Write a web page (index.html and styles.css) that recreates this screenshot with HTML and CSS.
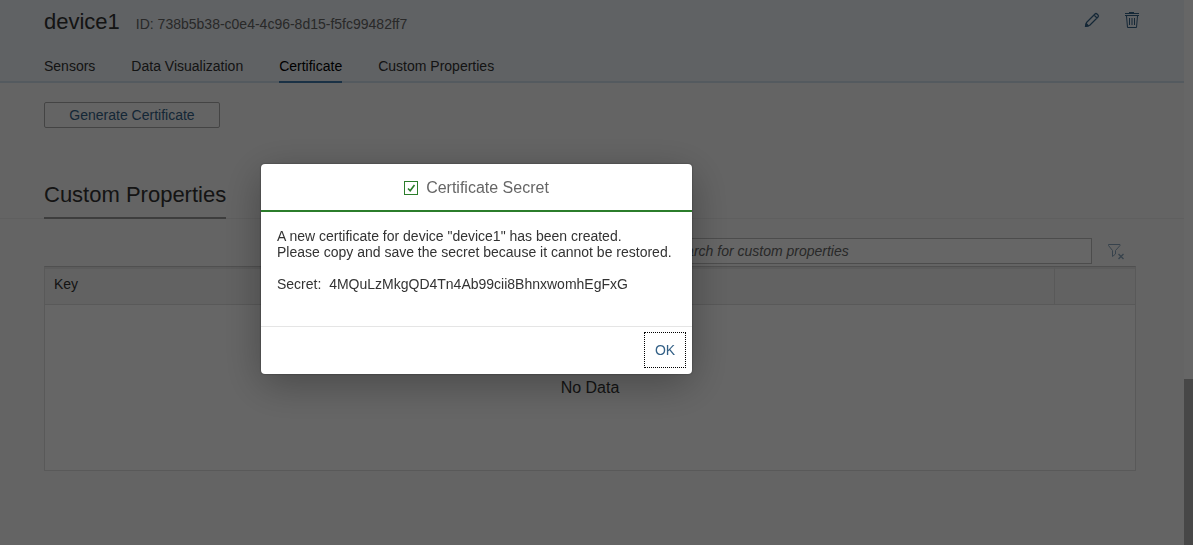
FILE: index.html
```html
<!DOCTYPE html>
<html lang="en">
<head>
<meta charset="utf-8">
<title>device1</title>
<link rel="stylesheet" href="styles.css">
</head>
<body>
<div class="app">
  <div class="page">
    <header class="header">
      <div class="title-row">
        <h1 class="title">device1</h1>
        <span class="device-id">ID: 738b5b38-c0e4-4c96-8d15-f5fc99482ff7</span>
        <div class="actions">
          <button class="icon-button" type="button" aria-label="Edit">
            <svg width="16" height="16" viewBox="0 0 16 16" fill="none" stroke="currentColor" stroke-width="1.2" stroke-linejoin="round"><path d="M1.500 14.500l1-4 8.500-8.500q1-1 2 0l1 1q1 1 0 2l-8.500 8.500zM10 3l3 3"/><path d="M1.500 14.500l.7-3 2.300 2.300z" fill="currentColor"/></svg>
          </button>
          <button class="icon-button" type="button" aria-label="Delete">
            <svg width="16" height="16" viewBox="0 0 16 16" fill="none" stroke="currentColor"><path d="M5 .5h5M1 1.500h14" /><path d="M1 3.500h14"/><path d="M2.500 4l1 11.500h9l1-11.500M5.500 6v7M8 6v7M10.500 6v7"/></svg>
          </button>
        </div>
      </div>
      <nav class="tabs">
        <a class="tab" href="#sensors">Sensors</a>
        <a class="tab" href="#visualization">Data Visualization</a>
        <a class="tab tab-active" href="#certificate">Certificate</a>
        <a class="tab" href="#properties">Custom Properties</a>
      </nav>
    </header>
    <main>
      <section class="certificate" id="certificate">
        <button class="generate" type="button">Generate Certificate</button>
      </section>
      <section id="properties">
        <div class="section-head"><h2 class="section-title">Custom Properties</h2></div>
        <div class="section-body">
          <div class="toolbar">
            <input class="search" type="text" aria-label="Search" placeholder="Search for custom properties">
            <button class="icon-button clear-filter" type="button" aria-label="Clear filter" disabled>
              <svg width="18" height="18" viewBox="0 0 18 18" fill="none" stroke="currentColor"><path d="M1.500 2.500h11.500v1L8.500 8.500v3.500l-3 2.500v-6l-4-5z"/><path d="M11.500 12l5 5M16.500 12l-5 5" stroke-width="1.400"/></svg>
            </button>
          </div>
          <table class="table">
            <thead><tr><th>Key</th><th class="col-action" aria-label="Actions"></th></tr></thead>
            <tbody><tr><td class="empty" colspan="2">No Data</td></tr></tbody>
          </table>
        </div>
      </section>
    </main>
  </div>
  <div class="scroll-track"><div class="scroll-thumb"></div></div>
</div>
<div class="overlay">
  <div class="dialog" role="alertdialog" aria-modal="true" aria-labelledby="dialog-title">
    <div class="dialog-head">
      <svg width="15" height="15" viewBox="0 0 15 15" fill="none" stroke="currentColor"><rect x=".5" y="1.500" width="13" height="13"/><path d="M4 8.500l2.200 2.200L10.500 5" stroke-width="1.600"/></svg>
      <h2 class="dialog-title" id="dialog-title">Certificate Secret</h2>
    </div>
    <div class="dialog-body">A new certificate for device "device1" has been created.
Please copy and save the secret because it cannot be restored.

Secret:  4MQuLzMkgQD4Tn4Ab99cii8BhnxwomhEgFxG</div>
    <div class="dialog-foot"><button class="ok" type="button">OK</button></div>
  </div>
</div>
</body>
</html>
```
FILE: styles.css
```css
* {
  box-sizing: border-box;
}

body {
  margin: 0;
  background: #fafafa;
  color: #333;
  font: 14px/16px "Liberation Sans", Arial, sans-serif;
}

h1,
h2 {
  margin: 0;
  font-weight: normal;
}

button {
  font: inherit;
  color: #346187;
  background: none;
}

.app {
  display: flex;
  height: 100vh;
  overflow: hidden;
}

.page {
  flex: 1;
  min-width: 0;
}

.header {
  background: #eff4f9;
  border-bottom: 2px solid #d1e0ee;
}

.title-row {
  display: flex;
  align-items: center;
  height: 48px;
  padding: 0 44px;
}

.title {
  padding-bottom: 4px;
  font-size: 22px;
  line-height: 26px;
}

.device-id {
  margin-left: 16px;
  color: #666;
}

.actions {
  display: flex;
  gap: 24px;
  margin-left: auto;
  padding-bottom: 8px;
}

.icon-button {
  display: flex;
  padding: 0;
  border: 0;
}

.tabs {
  display: flex;
  gap: 36px;
  padding: 0 44px;
}

.tab {
  height: 35px;
  margin-bottom: -2px;
  padding-top: 10px;
  color: #333;
  text-decoration: none;
}

.tab-active {
  color: #000;
  border-bottom: 2px solid #427cac;
}

.certificate {
  padding: 19px 44px 0;
}

.generate {
  display: block;
  width: 176px;
  height: 26px;
  padding: 0;
  border: 1px solid #ababab;
  border-radius: 2px;
}

.section-head {
  display: flex;
  margin-top: 52px;
  padding: 0 44px;
  border-bottom: 1px solid #ededed;
}

.section-title {
  height: 39px;
  margin-bottom: -1px;
  font-size: 22px;
  line-height: 30px;
  border-bottom: 2px solid #999;
}

.section-body {
  padding: 19px 48px 0 44px;
}

.toolbar {
  display: flex;
  align-items: center;
  justify-content: flex-end;
  gap: 15px;
  padding: 0 11px 2px 0;
}

.search {
  width: 432px;
  height: 26px;
  padding: 0 8px;
  color: #333;
  font: inherit;
  background: #fff;
  border: 1px solid #bfbfbf;
}

.search::placeholder {
  color: #666;
  font-style: italic;
}

.clear-filter {
  color: #8ba6bd;
}

.table {
  width: 100%;
  table-layout: fixed;
  border-collapse: separate;
  border-spacing: 0;
  border: 1px solid #dedede;
  border-top: 1px solid #c8c8c8;
}

.table th {
  height: 38px;
  padding: 0 9px 6px;
  font-weight: normal;
  text-align: left;
  background: #f5f5f5;
  border-top: 2px solid #e5e5e5;
  border-bottom: 1px solid #dedede;
}

.table .col-action {
  width: 81px;
  border-left: 1px solid #dedede;
}

.table .empty {
  height: 165px;
  padding: 0;
  font-size: 16px;
  text-align: center;
  background: #fff;
}

.scroll-track {
  display: flex;
  flex-direction: column;
  justify-content: flex-end;
  width: 9px;
  background: #fff;
}

.scroll-thumb {
  height: 166px;
  background: #b2b2b2;
}

.overlay {
  position: fixed;
  inset: 0;
  display: flex;
  align-items: center;
  justify-content: center;
  padding: 0 240px 7px 0;
  background: rgba(0, 0, 0, 0.6);
}

.dialog {
  width: 431px;
  background: #fff;
  border-radius: 4px;
  box-shadow: 0 10px 40px rgba(0, 0, 0, 0.3), 0 0 2px rgba(0, 0, 0, 0.5);
}

.dialog-head {
  display: flex;
  align-items: center;
  justify-content: center;
  gap: 7px;
  height: 48px;
  color: #2b7d2b;
  border-bottom: 2px solid #2b7d2b;
}

.dialog-title {
  padding-top: 2px;
  color: #666;
  font-size: 16px;
  line-height: 20px;
}

.dialog-body {
  padding: 16px 16px 34px;
  white-space: pre-wrap;
}

.dialog-foot {
  display: flex;
  justify-content: flex-end;
  padding: 5px 6px 6px;
  border-top: 1px solid #e5e5e5;
}

.ok {
  width: 42px;
  height: 36px;
  padding: 0;
  border: 1px dotted #000;
}
```
